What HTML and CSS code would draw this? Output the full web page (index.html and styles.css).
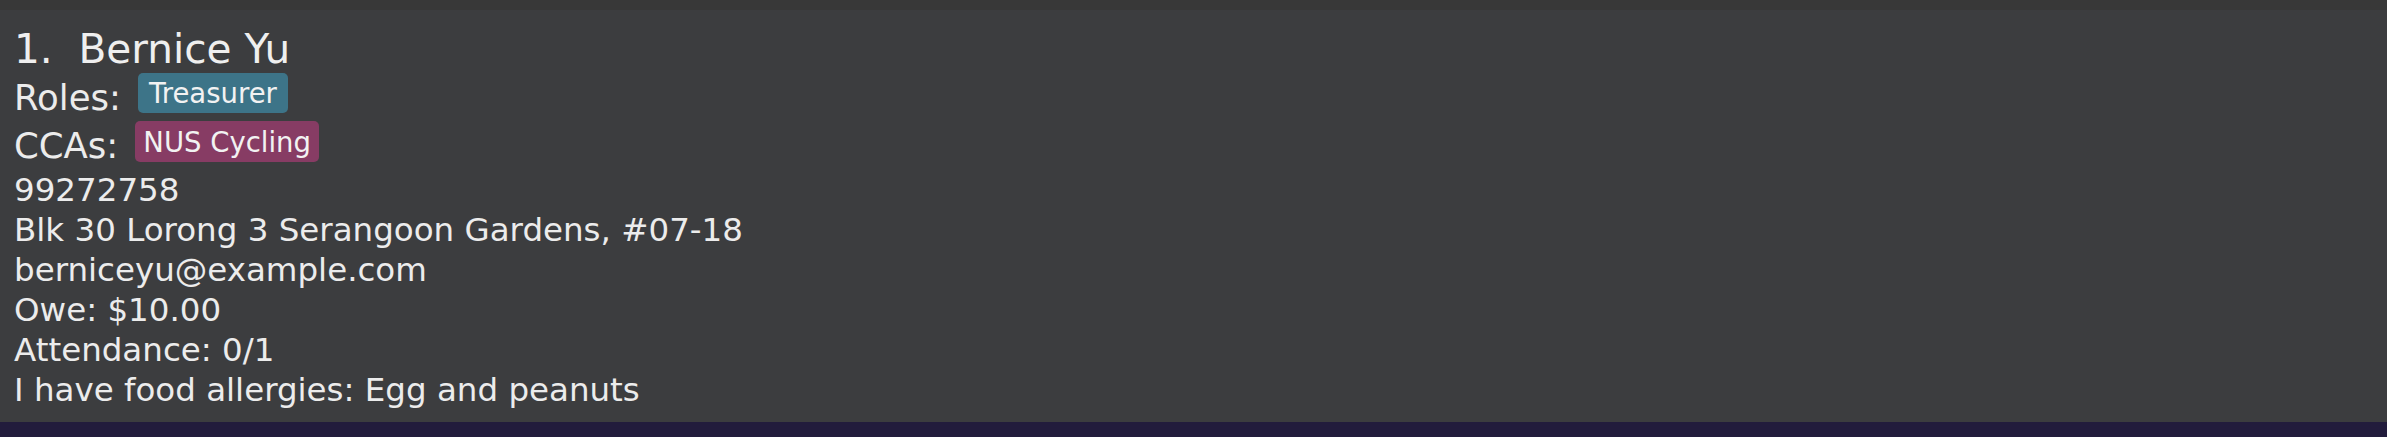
FILE: index.html
```html
<!DOCTYPE html>
<html>
<head>
<meta charset="utf-8">
<link rel="stylesheet" href="styles.css">
</head>
<body>
<div class="top-bar"></div>
<div class="card">
  <div class="name">1.&nbsp;&nbsp;Bernice Yu</div>
  <div class="tag-row">
    <span class="label">Roles:</span>
    <span class="tag tag-role">Treasurer</span>
  </div>
  <div class="tag-row tag-row-cca">
    <span class="label">CCAs:</span>
    <span class="tag tag-cca">NUS Cycling</span>
  </div>
  <div class="details">
    <div class="line">99272758</div>
    <div class="line">Blk 30 Lorong 3 Serangoon Gardens, #07-18</div>
    <div class="line">berniceyu@example.com</div>
    <div class="line">Owe: $10.00</div>
    <div class="line">Attendance: 0/1</div>
    <div class="line">I have food allergies: Egg and peanuts</div>
  </div>
</div>
<div class="bottom-bar"></div>
</body>
</html>
```
FILE: styles.css
```css
html, body {
  margin: 0;
  padding: 0;
  background: #3c3d3f;
  font-family: "DejaVu Sans", "Noto Sans", sans-serif;
  color: #ececec;
}

.top-bar {
  height: 10px;
  background: #383838;
}

.card {
  height: 412px;
  box-sizing: border-box;
  padding: 15px 12px 0 14px;
  background: #3c3d3f;
  display: flex;
  flex-direction: column;
}

.name {
  font-size: 40.6px;
  line-height: 48px;
  color: #efefef;
  white-space: nowrap;
}

.tag-row {
  display: flex;
  align-items: flex-start;
}

.tag-row-cca {
  margin-top: 3px;
}

.label {
  font-size: 35.5px;
  line-height: 40px;
  margin-top: 5px;
  margin-right: 17px;
  white-space: nowrap;
}

.tag {
  font-size: 27.5px;
  line-height: 41px;
  height: 40px;
  padding: 0 8px;
  border-radius: 5px;
  color: #f2f2f2;
  white-space: nowrap;
}

.tag-role {
  background: #3d7488;
  padding: 0 11px;
}

.tag-cca {
  background: #873c64;
  height: 41px;
  line-height: 42px;
}

.details {
  margin-top: 4px;
  display: flex;
  flex-direction: column;
}

.line {
  font-size: 32.5px;
  line-height: 40px;
  white-space: nowrap;
}

.bottom-bar {
  height: 15px;
  background: #221c3c;
}
```
